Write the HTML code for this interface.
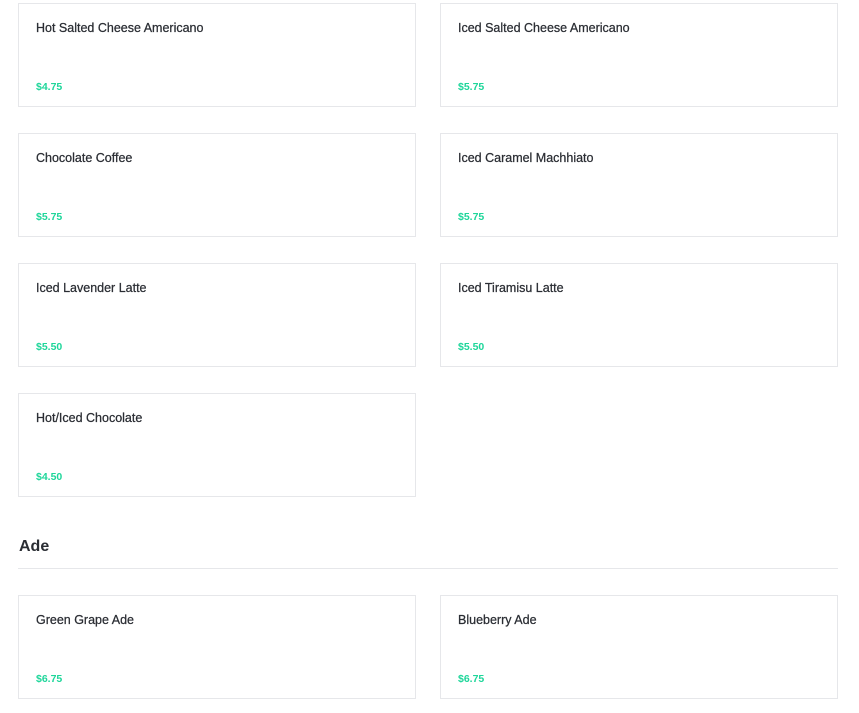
<!DOCTYPE html>
<html><head><style>
body{margin:0;width:859px;height:713px;background:#fff;font-family:"Liberation Sans",sans-serif;position:relative;overflow:hidden}
.c{position:absolute;width:396px;height:102px;border:1px solid #e6e7ea;box-sizing:content-box}
.t{position:absolute;left:17px;top:17px;font-size:12.5px;color:#2a2d33;white-space:nowrap;-webkit-text-stroke:0.25px #2a2d33}
.p{position:absolute;left:17px;top:77px;font-size:10.5px;color:#1ed69a;font-weight:bold}
.h{position:absolute;left:19px;top:538px;font-size:16px;font-weight:bold;color:#2a2d33}
.l{position:absolute;left:18px;top:568px;width:820px;height:1px;background:#e6e7ea}
</style></head><body>
<div class="c" style="left:18px;top:3px"><div class="t">Hot Salted Cheese Americano</div><div class="p">$4.75</div></div>
<div class="c" style="left:440px;top:3px"><div class="t">Iced Salted Cheese Americano</div><div class="p">$5.75</div></div>
<div class="c" style="left:18px;top:133px"><div class="t">Chocolate Coffee</div><div class="p">$5.75</div></div>
<div class="c" style="left:440px;top:133px"><div class="t">Iced Caramel Machhiato</div><div class="p">$5.75</div></div>
<div class="c" style="left:18px;top:263px"><div class="t">Iced Lavender Latte</div><div class="p">$5.50</div></div>
<div class="c" style="left:440px;top:263px"><div class="t">Iced Tiramisu Latte</div><div class="p">$5.50</div></div>
<div class="c" style="left:18px;top:393px"><div class="t">Hot/Iced Chocolate</div><div class="p">$4.50</div></div>
<div class="h">Ade</div><div class="l"></div>
<div class="c" style="left:18px;top:595px"><div class="t">Green Grape Ade</div><div class="p">$6.75</div></div>
<div class="c" style="left:440px;top:595px"><div class="t">Blueberry Ade</div><div class="p">$6.75</div></div>
</body></html>
